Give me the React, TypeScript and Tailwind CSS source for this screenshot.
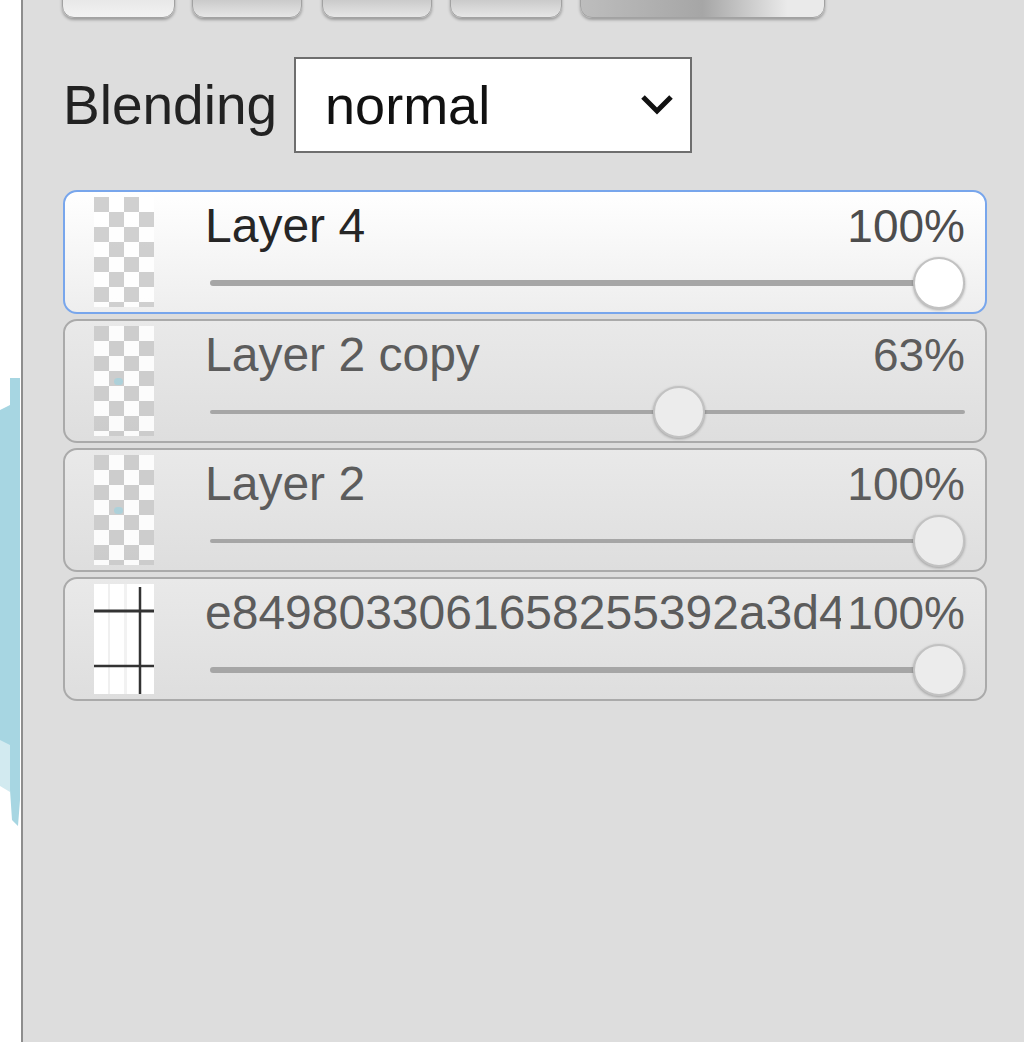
import React from 'react';

type Layer = {
  name: string;
  opacity: number;
  active?: boolean;
  thumb: 'checker' | 'sketch';
  speck?: boolean;
};

const layers: Layer[] = [
  { name: 'Layer 4', opacity: 100, active: true, thumb: 'checker' },
  { name: 'Layer 2 copy', opacity: 63, thumb: 'checker', speck: true },
  { name: 'Layer 2', opacity: 100, thumb: 'checker', speck: true },
  { name: 'e8498033061658255392a3d4f1c7b9e0.png', opacity: 100, thumb: 'sketch' }
];

function Thumb({ layer }: { layer: Layer }) {
  if (layer.thumb === 'sketch') {
    return (
      <div className="w-[60px] h-[110px] bg-white shrink-0 self-center">
        <svg width="60" height="110" viewBox="0 0 60 110">
          <rect x="14" y="0" width="2" height="110" fill="#f0f0f0" />
          <rect x="30" y="0" width="3" height="110" fill="#f2f2f2" />
          <line x1="0" y1="27" x2="60" y2="27" stroke="#333" strokeWidth="3" />
          <line x1="0" y1="82" x2="60" y2="82" stroke="#333" strokeWidth="2.5" />
          <line x1="46" y1="3" x2="46" y2="110" stroke="#333" strokeWidth="2.5" />
        </svg>
      </div>
    );
  }
  return (
    <div className="relative w-[60px] h-[110px] shrink-0 self-center bg-[conic-gradient(#fff_25%,#cbcbcb_0_50%,#fff_0_75%,#cbcbcb_0)] bg-[length:30px_30px] opacity-90">
      {layer.speck && (
        <span className="absolute left-[20px] top-[52px] w-[9px] h-[7px] rounded-full bg-[#9fd0dc] opacity-80" />
      )}
    </div>
  );
}

function Slider({ value, active, thick }: { value: number; active?: boolean; thick?: boolean }) {
  const left = ((755 - 52) * value) / 100;
  return (
    <div className="relative h-[52px] ml-[5px] flex items-center">
      <div className={`w-full rounded-full bg-[#a6a6a6] ${thick ? 'h-[6px]' : 'h-[4px]'}`} />
      <div
        className={`absolute top-0 w-[52px] h-[52px] rounded-full border-2 border-[#c2c2c2] shadow-[0_1px_3px_rgba(0,0,0,0.3)] ${active ? 'bg-white' : 'bg-[#ececec]'}`}
        style={{ left }}
      />
    </div>
  );
}

function LayerRow({ layer }: { layer: Layer }) {
  return (
    <div
      className={`h-[124px] rounded-[14px] border-2 flex pl-[29px] pr-[20px] ${
        layer.active
          ? 'border-[#78a6ec] bg-[linear-gradient(to_bottom,#ffffff,#eeeeee)]'
          : 'border-[#aaaaaa] bg-[linear-gradient(to_bottom,#e9e9e9,#dedede)]'
      }`}
    >
      <Thumb layer={layer} />
      <div className="flex-1 min-w-0 ml-[51px] pt-[4px] flex flex-col">
        <div className="flex items-baseline h-[60px]">
          <span className={`flex-1 min-w-0 overflow-hidden whitespace-nowrap text-[48px] leading-[60px] ${layer.active ? 'text-[#262626]' : 'text-[#5c5c5c]'}`}>
            {layer.name}
          </span>
          <span className={`shrink-0 ml-[6px] text-[46px] leading-[60px] ${layer.active ? 'text-[#4d4d4d]' : 'text-[#5c5c5c]'}`}>
            {layer.opacity}%
          </span>
        </div>
        <div className="mt-[1px]">
          <Slider value={layer.opacity} active={layer.active} thick={layer.active || layer.thumb === 'sketch'} />
        </div>
      </div>
    </div>
  );
}

export default function App() {
  return (
    <div className="flex w-[1024px] h-[1042px] overflow-hidden font-['Liberation_Sans',Arial,sans-serif]">
      {/* canvas edge */}
      <div className="w-[21px] shrink-0 bg-white">
        <svg width="21" height="1042" viewBox="0 0 21 1042">
          <path d="M10 378 L20 378 L20 800 L18 826 L12 820 L10 790 L0 782 L0 410 L10 405 Z" fill="#a7d6e2" />
          <path d="M0 740 L10 745 L10 792 L0 786 Z" fill="#d2eaf0" />
        </svg>
      </div>
      <div className="w-[2px] shrink-0 bg-[#8d8d8d]" />

      {/* layers panel */}
      <div className="flex-1 bg-[#dddddd] pl-[39px]">
        <div className="flex h-[40px] -mt-[22px]">
          <div className="w-[113px] rounded-[12px] border border-[#a2a2a2] bg-[linear-gradient(to_bottom,#dcdcdc,#f2f2f2)] shadow-[0_2px_3px_rgba(0,0,0,0.3)]" />
          <div className="w-[110px] ml-[17px] rounded-[12px] border border-[#a2a2a2] bg-[linear-gradient(to_bottom,#a9a9a9,#e6e6e6)] shadow-[0_2px_3px_rgba(0,0,0,0.3)]" />
          <div className="w-[110px] ml-[20px] rounded-[12px] border border-[#a2a2a2] bg-[linear-gradient(to_bottom,#a9a9a9,#e6e6e6)] shadow-[0_2px_3px_rgba(0,0,0,0.3)]" />
          <div className="w-[112px] ml-[18px] rounded-[12px] border border-[#a2a2a2] bg-[linear-gradient(to_bottom,#a9a9a9,#e6e6e6)] shadow-[0_2px_3px_rgba(0,0,0,0.3)]" />
          <div className="w-[245px] ml-[18px] rounded-[12px] border border-[#a2a2a2] bg-[linear-gradient(to_right,#bdbdbd,#a6a6a6_50%,#eaeaea_85%)] shadow-[0_2px_3px_rgba(0,0,0,0.3)]" />
        </div>

        {/* Blending */}
        <div className="flex items-center mt-[39px] pl-[1px]">
          <span className="text-[55px] leading-none text-[#222]">Blending</span>
          <div className="ml-[17px] w-[398px] h-[96px] border-2 border-[#6e6e6e] bg-white flex items-center justify-between pl-[29px] pr-[16px]">
            <span className="text-[54px] leading-none text-[#111]">normal</span>
            <svg width="34" height="22" viewBox="0 0 34 22">
              <polyline points="3,3 17,17 31,3" fill="none" stroke="#111" strokeWidth="5" />
            </svg>
          </div>
        </div>

        {/* Layers */}
        <div className="mt-[37px] w-[924px] ml-[1px] flex flex-col gap-[5px]">
          {layers.map(l => (
            <LayerRow key={l.name} layer={l} />
          ))}
        </div>
      </div>
    </div>
  );
}
